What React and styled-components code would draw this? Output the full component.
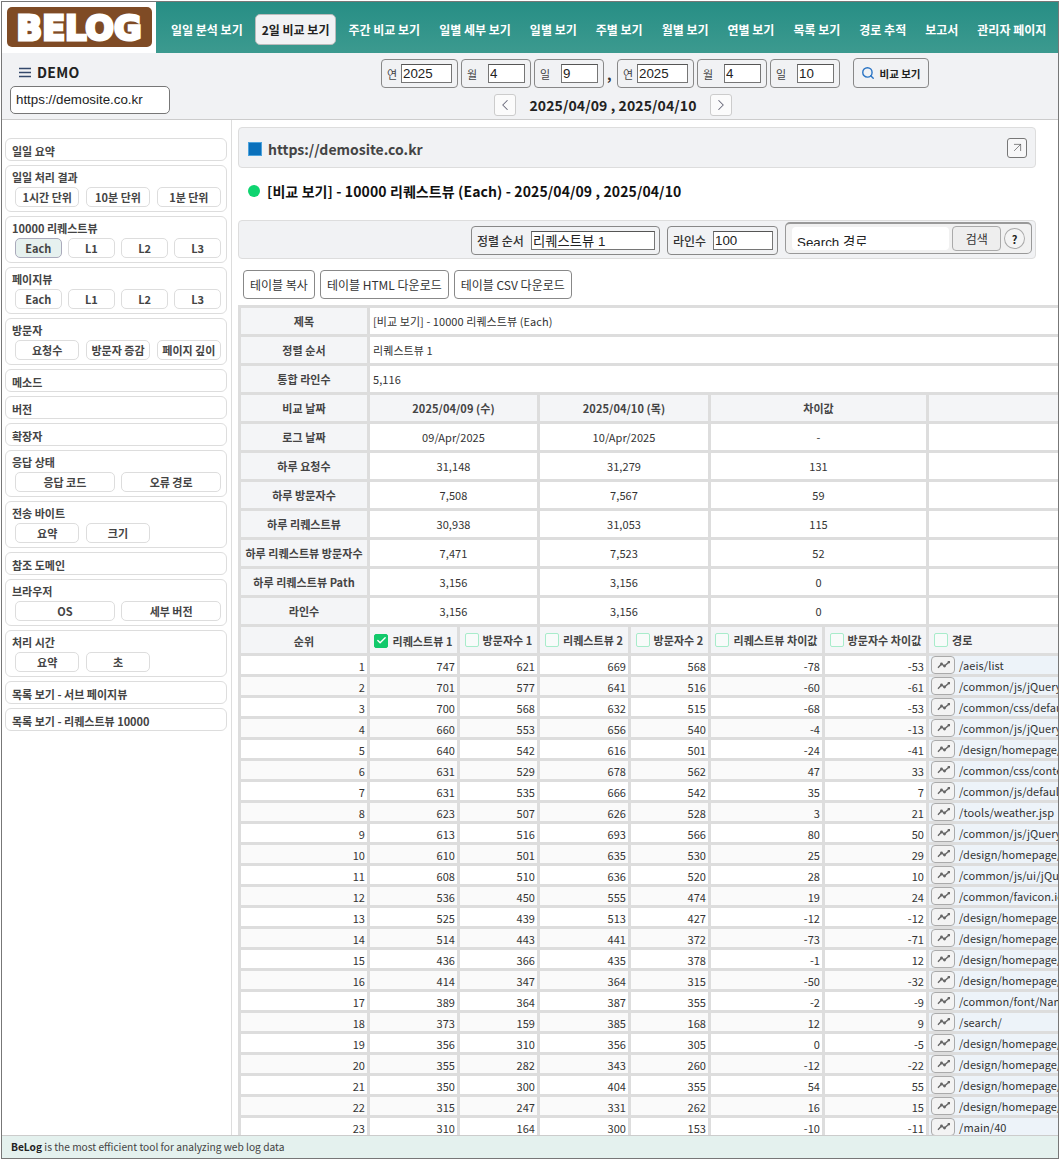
import React from 'react';
import styled, { createGlobalStyle } from 'styled-components';
import { ChevronLeft, ChevronRight, Search, ArrowUpRight, Check } from 'lucide-react';

const FONT = '"Noto Sans CJK KR", "Noto Sans", sans-serif';
const INPUT_FONT = '"Liberation Sans", "Noto Sans CJK KR", sans-serif';

const GlobalStyle = createGlobalStyle`
  html, body { margin: 0; padding: 0; background: #fff; }
  * { box-sizing: border-box; }
  body { font-family: ${FONT}; color: #333; }
`;

const Frame = styled.div`
  margin: 1px;
  width: 1058px;
  height: 1158px;
  border: 1px solid #777;
  display: flex;
  flex-direction: column;
  overflow: hidden;
`;

const TopBar = styled.header`
  height: 51px;
  flex: none;
  display: flex;
  background: linear-gradient(180deg, #278e85, #3c9a8f);
`;

const LogoBox = styled.div`
  width: 154px;
  background: #fff;
  padding: 5px 4px 5px 5px;
  flex: none;
`;

const Nav = styled.nav`
  display: flex;
  align-items: center;
  padding: 4px 0 0 7px;
  gap: 3px;
`;

const NavItem = styled.a`
  font-size: 12px;
  font-weight: 700;
  white-space: nowrap;
  padding: 0 ${p => (p.$active ? '6px' : '7px')};
  margin: 0 ${p => (p.$active ? '1px' : '0')};
  height: 31px;
  line-height: 29px;
  border: 1px solid ${p => (p.$active ? '#bbb' : 'transparent')};
  border-radius: 5px;
  background: ${p => (p.$active ? '#f1f2f4' : 'transparent')};
  color: ${p => (p.$active ? '#222' : '#fff')};
`;

const SubBar = styled.div`
  height: 67px;
  flex: none;
  display: flex;
  background: #f1f2f4;
  border-bottom: 1px solid #ccc;
`;

const DemoBlock = styled.div`
  width: 379px;
  flex: none;
  padding: 9px 0 0 8px;
`;

const DemoTitle = styled.div`
  display: flex;
  align-items: center;
  gap: 6px;
  padding-left: 9px;
  height: 20px;
  font-size: 14px;
  font-weight: 700;
  color: #222;
  letter-spacing: 0.3px;
`;

const SiteSelect = styled.div`
  margin-top: 4px;
  width: 160px;
  height: 28px;
  padding-left: 5px;
  background: #fff;
  border: 1px solid #777;
  border-radius: 5px;
  font: 13.33px/26px ${INPUT_FONT};
  color: #222;
`;

const DateColumn = styled.div`
  width: 460px;
  flex: none;
  padding-top: 6px;
`;

const DateRow = styled.div`
  display: flex;
  align-items: center;
  gap: 3px;
`;

const DateGroup = styled.label`
  display: flex;
  align-items: center;
  justify-content: space-between;
  width: ${p => (p.$wide ? '77px' : '70px')};
  height: 29px;
  padding: 0 5px;
  border: 1px solid #888;
  border-radius: 4px;
  font-size: 11px;
  color: #444;
`;

const Comma = styled.span`
  width: 7px;
  font-size: 14px;
  font-weight: 700;
  color: #333;
`;

const Field = styled.input`
  width: ${p => p.$w}px;
  height: 19px;
  padding: 0 1px;
  border: 1px solid #767676;
  border-top-color: #555;
  background: #fff;
  font: 13.33px ${INPUT_FONT};
  color: #222;
  outline: none;
`;

const DateNav = styled.div`
  display: flex;
  align-items: center;
  justify-content: center;
  gap: 13px;
  margin-top: 6px;
  padding-left: 4px;
`;

const ArrowBtn = styled.button`
  width: 22px;
  height: 22px;
  padding: 0;
  display: flex;
  align-items: center;
  justify-content: center;
  border: 1px solid #ccc;
  border-radius: 3px;
  background: #fbfbfb;
  color: #667;
`;

const DateLabel = styled.div`
  font-size: 14px;
  font-weight: 700;
  letter-spacing: 0.1px;
  color: #222;
  white-space: nowrap;
`;

const SearchBtn = styled.button`
  margin: 5px 0 0 12px;
  width: 76px;
  height: 30px;
  display: flex;
  align-items: center;
  justify-content: center;
  gap: 4px;
  padding: 0;
  border: 1px solid #888;
  border-radius: 4px;
  background: #f1f2f4;
  font-family: ${FONT};
  font-size: 10.5px;
  font-weight: 700;
  color: #222;
`;

const Body = styled.div`
  flex: 1;
  min-height: 0;
  display: flex;
  overflow: hidden;
`;

const Sidebar = styled.aside`
  width: 230px;
  flex: none;
  border-right: 1px solid #ddd;
  padding: 18px 4px 0 3px;
  display: flex;
  flex-direction: column;
  gap: 4px;
`;

const Card = styled.div`
  border: 1px solid #ddd;
  border-radius: 6px;
  padding: 0 5px 0 6px;
  min-height: 23px;
`;

const CardTitle = styled.div`
  height: 21px;
  line-height: ${p => (p.$solo ? '25px' : '23px')};
  font-size: 11px;
  font-weight: 700;
  color: #444;
`;

const SubGrid = styled.div`
  display: grid;
  grid-template-columns: repeat(${p => p.$cols}, 1fr);
  gap: 6.5px;
  padding: 0 0 4px 3px;
`;

const SubBtn = styled.button`
  height: 20px;
  padding: 0;
  border: 1px solid ${p => (p.$active ? '#aab' : '#ddd')};
  border-radius: 5px;
  background: ${p => (p.$active ? '#e6f1ef' : '#fff')};
  font-family: ${FONT};
  font-size: 11px;
  font-weight: 700;
  color: #444;
  white-space: nowrap;
`;

const Main = styled.main`
  flex: 1;
  min-width: 0;
  padding: 7px 0 0 6px;
  overflow: hidden;
`;

const Panel = styled.div`
  width: 798px;
  background: #f1f2f4;
  border: 1px solid #ddd;
  border-radius: 4px;
`;

const UrlPanel = styled(Panel)`
  height: 41px;
  display: flex;
  align-items: center;
  justify-content: space-between;
  padding: 0 8px 0 9px;
`;

const UrlText = styled.div`
  display: flex;
  align-items: center;
  gap: 6px;
  padding-top: 3px;
  font-size: 14px;
  font-weight: 700;
  color: #444;
`;

const BlueSquare = styled.span`
  width: 14px;
  height: 14px;
  background: #0a70bb;
  border: 1px solid #4da3dd;
`;

const ExtBtn = styled.button`
  width: 20px;
  height: 20px;
  padding: 0;
  display: flex;
  align-items: center;
  justify-content: center;
  border: 1px solid #777;
  border-radius: 3px;
  background: #f7f7f8;
  color: #444;
`;

const PageTitle = styled.h2`
  margin: 0;
  height: 52px;
  display: flex;
  align-items: center;
  gap: 7px;
  padding: 0 0 7px 10px;
  font-size: 14px;
  font-weight: 700;
  letter-spacing: 0.1px;
  color: #111;
`;

const GreenDot = styled.span`
  width: 12px;
  height: 12px;
  border-radius: 50%;
  background: #0fd470;
`;

const ToolPanel = styled(Panel)`
  height: 39px;
  display: flex;
  align-items: center;
  justify-content: flex-end;
  gap: 7px;
  padding: 0 3px 0 0;
`;

const ToolGroup = styled.label`
  display: flex;
  align-items: center;
  gap: 7px;
  height: 29px;
  padding: 0 4px 0 5px;
  margin-top: 1px;
  border: 1px solid #888;
  border-radius: 4px;
  font-size: 12px;
  font-weight: 500;
  color: #333;
`;

const SearchBox = styled.div`
  width: 247px;
  height: 32px;
  margin-top: -3px;
  display: flex;
  align-items: center;
  padding: 0 6px;
  border: 1px solid #999;
  border-top: 2px solid #999;
  border-radius: 5px;
  background: #f1f1f1;
`;

const SearchField = styled.div`
  width: 158px;
  height: 23px;
  padding: 0 0 4px 5px;
  border-radius: 4px;
  background: #fff;
`;

const SearchInput = styled.input`
  display: block;
  width: 100%;
  height: 19px;
  padding: 9px 0 0;
  border: none;
  background: transparent;
  font: 13.33px ${INPUT_FONT};
  color: #222;
  outline: none;
`;

const SearchGo = styled.button`
  width: 49px;
  height: 25px;
  margin-left: 3px;
  padding: 0;
  border: 1px solid #aaa;
  border-radius: 4px;
  background: #eee;
  font-family: ${FONT};
  font-size: 12px;
  color: #333;
`;

const HelpBtn = styled.button`
  width: 21px;
  height: 21px;
  margin-left: 3px;
  padding: 0;
  border: 1px solid #aaa;
  border-radius: 50%;
  background: #f4f4f4;
  font-family: ${FONT};
  font-size: 11px;
  font-weight: 700;
  color: #222;
`;

const TableActions = styled.div`
  display: flex;
  gap: 5px;
  padding: 11px 0 6px 5px;
`;

const ActionBtn = styled.button`
  height: 29px;
  padding: 0 6px;
  border: 1px solid #888;
  border-radius: 4px;
  background: #fff;
  font-family: ${FONT};
  font-size: 12px;
  color: #333;
  white-space: nowrap;
`;

const Table = styled.table`
  table-layout: fixed;
  width: 1000px;
  border-collapse: collapse;
  font-size: 11px;
  letter-spacing: 0.07px;
  color: #333;
  border-top: 2px solid #ddd;
  border-left: 3px solid #ddd;
`;

const Th = styled.th`
  height: 29px;
  padding: ${p => (p.$path ? '2px 0 0 5px' : p.$low ? '2px 0 0' : '0')};
  background: #f4f5f7;
  border: 3px solid #ddd;
  font-weight: 700;
  color: #444;
  text-align: ${p => (p.$path ? 'left' : 'center')};
  white-space: nowrap;
`;

const ValueCell = styled.td`
  height: 29px;
  padding: 0 3px;
  border: 3px solid #ddd;
  background: ${p => (p.$head ? '#f4f5f7' : '#fff')};
  font-weight: ${p => (p.$head ? 700 : 400)};
  color: ${p => (p.$head ? '#444' : '#333')};
  text-align: ${p => (p.$left ? 'left' : 'center')};
`;

const HeadLabel = styled.span`
  display: inline-flex;
  align-items: center;
  gap: 4px;
`;

const Box = styled.span`
  width: 14px;
  height: 14px;
  display: inline-flex;
  align-items: center;
  justify-content: center;
  border: 1px solid ${p => (p.$on ? '#12c96b' : '#a8eccb')};
  border-radius: 2px;
  background: ${p => (p.$on ? '#12c96b' : '#f8fbfa')};
  color: #fff;
`;

const Row = styled.tr`
  background: ${p => (p.$even ? '#fafafa' : '#fff')};
`;

const Num = styled.td`
  height: 21px;
  padding: 1px 2px 0 0;
  border: 3px solid #ddd;
  text-align: right;
`;

const PathCell = styled.td`
  height: 21px;
  padding: 0 0 0 2px;
  border: 3px solid #ddd;
  background: #edf3f9;
  white-space: nowrap;
  overflow: hidden;
`;

const PathInner = styled.div`
  display: flex;
  align-items: center;
  gap: 4px;
  font-size: 11px;
`;

const TrendBtn = styled.button`
  width: 24px;
  height: 18px;
  flex: none;
  padding: 0;
  display: flex;
  align-items: center;
  justify-content: center;
  border: 1px solid #aaa;
  border-radius: 4px;
  background: #f3f3f3;
`;

const Footer = styled.footer`
  height: 23px;
  flex: none;
  padding-left: 9px;
  line-height: 22px;
  background: #e4f1ee;
  border-top: 1px solid #ccc;
  font-size: 10.2px;
  color: #444;
  b { color: #222; }
`;

const sideMenu = [
  { title: '일일 요약' },
  { title: '일일 처리 결과', cols: 3, items: ['1시간 단위', '10분 단위', '1분 단위'] },
  { title: '10000 리퀘스트뷰', cols: 4, items: ['Each', 'L1', 'L2', 'L3'], active: 'Each' },
  { title: '페이지뷰', cols: 4, items: ['Each', 'L1', 'L2', 'L3'] },
  { title: '방문자', cols: 3, items: ['요청수', '방문자 증감', '페이지 깊이'] },
  { title: '메소드' },
  { title: '버전' },
  { title: '확장자' },
  { title: '응답 상태', cols: 2, items: ['응답 코드', '오류 경로'] },
  { title: '전송 바이트', cols: 3, items: ['요약', '크기'] },
  { title: '참조 도메인' },
  { title: '브라우저', cols: 2, items: ['OS', '세부 버전'] },
  { title: '처리 시간', cols: 3, items: ['요약', '초'] },
  { title: '목록 보기 - 서브 페이지뷰' },
  { title: '목록 보기 - 리퀘스트뷰 10000' },
];

const navItems = ['일일 분석 보기', '2일 비교 보기', '주간 비교 보기', '일별 세부 보기', '일별 보기', '주별 보기', '월별 보기', '연별 보기', '목록 보기', '경로 추적', '보고서', '관리자 페이지'];

const summary = [
  ['비교 날짜', '2025/04/09 (수)', '2025/04/10 (목)', '차이값', true],
  ['로그 날짜', '09/Apr/2025', '10/Apr/2025', '-'],
  ['하루 요청수', '31,148', '31,279', '131'],
  ['하루 방문자수', '7,508', '7,567', '59'],
  ['하루 리퀘스트뷰', '30,938', '31,053', '115'],
  ['하루 리퀘스트뷰 방문자수', '7,471', '7,523', '52'],
  ['하루 리퀘스트뷰 Path', '3,156', '3,156', '0'],
  ['라인수', '3,156', '3,156', '0'],
];

const rows = [
  [747, 621, 669, 568, -78, -53, '/aeis/list'],
  [701, 577, 641, 516, -60, -61, '/common/js/jQuery/jquery.js'],
  [700, 568, 632, 515, -68, -53, '/common/css/default.css'],
  [660, 553, 656, 540, -4, -13, '/common/js/jQuery/ui.js'],
  [640, 542, 616, 501, -24, -41, '/design/homepage/images/a.png'],
  [631, 529, 678, 562, 47, 33, '/common/css/content.css'],
  [631, 535, 666, 542, 35, 7, '/common/js/default.js'],
  [623, 507, 626, 528, 3, 21, '/tools/weather.jsp'],
  [613, 516, 693, 566, 80, 50, '/common/js/jQuery/form.js'],
  [610, 501, 635, 530, 25, 29, '/design/homepage/images/b.png'],
  [608, 510, 636, 520, 28, 10, '/common/js/ui/jQuery.ui.js'],
  [536, 450, 555, 474, 19, 24, '/common/favicon.ico'],
  [525, 439, 513, 427, -12, -12, '/design/homepage/images/c.png'],
  [514, 443, 441, 372, -73, -71, '/design/homepage/images/d.png'],
  [436, 366, 435, 378, -1, 12, '/design/homepage/images/e.png'],
  [414, 347, 364, 315, -50, -32, '/design/homepage/images/f.png'],
  [389, 364, 387, 355, -2, -9, '/common/font/NanumGothic.woff'],
  [373, 159, 385, 168, 12, 9, '/search/'],
  [356, 310, 356, 305, 0, -5, '/design/homepage/images/g.png'],
  [355, 282, 343, 260, -12, -22, '/design/homepage/images/h.png'],
  [350, 300, 404, 355, 54, 55, '/design/homepage/images/i.png'],
  [315, 247, 331, 262, 16, 15, '/design/homepage/images/j.png'],
  [310, 164, 300, 153, -10, -11, '/main/40'],
];

const colHeads = [
  ['리퀘스트뷰 1', true],
  ['방문자수 1'],
  ['리퀘스트뷰 2'],
  ['방문자수 2'],
  ['리퀘스트뷰 차이값'],
  ['방문자수 차이값'],
];

const TrendIcon = () => (
  <svg width="13" height="8" viewBox="0 0 13 8" fill="#666" stroke="#666" strokeWidth="1.4" strokeLinejoin="round">
    <polyline fill="none" points="1,6.8 4.5,3 7.5,5 12,1" />
    <circle cx="4.5" cy="3" r="0.7" />
    <circle cx="7.5" cy="5" r="0.7" />
    <circle cx="12" cy="1" r="0.7" />
  </svg>
);

const MenuIcon = () => (
  <svg width="12" height="11" viewBox="0 0 12 11" fill="none" stroke="#34496b" strokeWidth="1.6">
    <path d="M0 1.5h12M0 5.5h12M0 9.5h12" />
  </svg>
);

const Logo = () => (
  <svg width="145" height="40" viewBox="0 0 145 40">
    <rect width="145" height="40" rx="5" fill="#7f4b25" />
    <text x="9.5" y="33" textLength="125" lengthAdjust="spacingAndGlyphs" fontFamily="'DejaVu Sans', sans-serif" fontWeight="700" fontSize="34" fill="#fff" stroke="#fff" strokeWidth="3">BELOG</text>
  </svg>
);

const App = () => (
  <>
    <GlobalStyle />
    <Frame>
      <TopBar>
        <LogoBox><Logo /></LogoBox>
        <Nav>
          {navItems.map((n, i) => <NavItem key={n} $active={i === 1}>{n}</NavItem>)}
        </Nav>
      </TopBar>

      <SubBar>
        <DemoBlock>
          <DemoTitle><MenuIcon />DEMO</DemoTitle>
          <SiteSelect>https://demosite.co.kr</SiteSelect>
        </DemoBlock>
        <DateColumn>
          <DateRow>
            <DateGroup $wide>연<Field $w={51} defaultValue="2025" /></DateGroup>
            <DateGroup>월<Field $w={37} defaultValue="4" /></DateGroup>
            <DateGroup>일<Field $w={37} defaultValue="9" /></DateGroup>
            <Comma>,</Comma>
            <DateGroup $wide>연<Field $w={51} defaultValue="2025" /></DateGroup>
            <DateGroup>월<Field $w={37} defaultValue="4" /></DateGroup>
            <DateGroup>일<Field $w={37} defaultValue="10" /></DateGroup>
          </DateRow>
          <DateNav>
            <ArrowBtn><ChevronLeft size={18} strokeWidth={1.4} /></ArrowBtn>
            <DateLabel>2025/04/09 , 2025/04/10</DateLabel>
            <ArrowBtn><ChevronRight size={18} strokeWidth={1.4} /></ArrowBtn>
          </DateNav>
        </DateColumn>
        <SearchBtn><Search size={14} color="#2a74c4" strokeWidth={2.4} />비교 보기</SearchBtn>
      </SubBar>

      <Body>
        <Sidebar>
          {sideMenu.map(m => (
            <Card key={m.title}>
              <CardTitle $solo={!m.items}>{m.title}</CardTitle>
              {m.items && (
                <SubGrid $cols={m.cols}>
                  {m.items.map(it => <SubBtn key={it} $active={m.active === it}>{it}</SubBtn>)}
                </SubGrid>
              )}
            </Card>
          ))}
        </Sidebar>

        <Main>
          <UrlPanel>
            <UrlText><BlueSquare />https://demosite.co.kr</UrlText>
            <ExtBtn><ArrowUpRight size={15} strokeWidth={1} /></ExtBtn>
          </UrlPanel>
          <PageTitle><GreenDot />[비교 보기] - 10000 리퀘스트뷰 (Each) - 2025/04/09 , 2025/04/10</PageTitle>
          <ToolPanel>
            <ToolGroup>정렬 순서<Field $w={124} defaultValue="리퀘스트뷰 1" /></ToolGroup>
            <ToolGroup>라인수<Field $w={60} defaultValue="100" /></ToolGroup>
            <SearchBox>
              <SearchField><SearchInput defaultValue="Search 경로" /></SearchField>
              <SearchGo>검색</SearchGo>
              <HelpBtn>?</HelpBtn>
            </SearchBox>
          </ToolPanel>
          <TableActions>
            <ActionBtn>테이블 복사</ActionBtn>
            <ActionBtn>테이블 HTML 다운로드</ActionBtn>
            <ActionBtn>테이블 CSV 다운로드</ActionBtn>
          </TableActions>
          <Table>
            <colgroup>
              <col style={{ width: 129 }} />
              <col style={{ width: 90 }} />
              <col style={{ width: 80 }} />
              <col style={{ width: 91 }} />
              <col style={{ width: 80 }} />
              <col style={{ width: 114 }} />
              <col style={{ width: 104 }} />
              <col />
            </colgroup>
            <tbody>
              <tr><Th>제목</Th><ValueCell $left colSpan={7}>[비교 보기] - 10000 리퀘스트뷰 (Each)</ValueCell></tr>
              <tr><Th>정렬 순서</Th><ValueCell $left colSpan={7}>리퀘스트뷰 1</ValueCell></tr>
              <tr><Th>통합 라인수</Th><ValueCell $left colSpan={7}>5,116</ValueCell></tr>
              {summary.map(([label, a, b, c, head]) => (
                <tr key={label}>
                  <Th>{label}</Th>
                  <ValueCell $head={head} colSpan={2}>{a}</ValueCell>
                  <ValueCell $head={head} colSpan={2}>{b}</ValueCell>
                  <ValueCell $head={head} colSpan={2}>{c}</ValueCell>
                  <ValueCell $head={head} />
                </tr>
              ))}
              <tr>
                <Th $low>순위</Th>
                {colHeads.map(([label, on]) => (
                  <Th $low key={label}>
                    <HeadLabel>
                      <Box $on={on}>{on && <Check size={11} strokeWidth={3} />}</Box>
                      {label}
                    </HeadLabel>
                  </Th>
                ))}
                <Th $path><HeadLabel><Box />경로</HeadLabel></Th>
              </tr>
              {rows.map((r, i) => (
                <Row key={i} $even={i % 2 === 1}>
                  <Num>{i + 1}</Num>
                  {r.slice(0, 6).map((v, j) => <Num key={j}>{v}</Num>)}
                  <PathCell>
                    <PathInner><TrendBtn><TrendIcon /></TrendBtn>{r[6]}</PathInner>
                  </PathCell>
                </Row>
              ))}
            </tbody>
          </Table>
        </Main>
      </Body>

      <Footer><b>BeLog</b> is the most efficient tool for analyzing web log data</Footer>
    </Frame>
  </>
);

export default App;
